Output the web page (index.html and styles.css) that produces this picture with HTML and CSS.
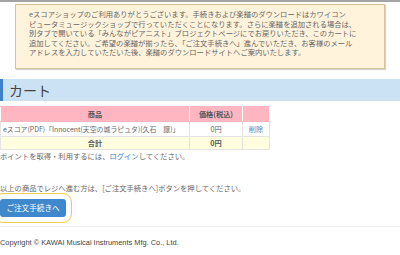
FILE: index.html
```html
<!DOCTYPE html>
<html lang="ja">
<head>
    <meta charset="UTF-8">
    <title>カート</title>
    <link rel="stylesheet" href="styles.css">
</head>
<body>
    <div class="top-bar"></div>

    <div class="notice">
        eスコアショップのご利用ありがとうございます。手続きおよび楽譜のダウンロードはカワイコン<br>
        ピュータミュージックショップで行っていただくことになります。さらに楽譜を追加される場合は、<br>
        別タブで開いている「みんながピアニスト」プロジェクトページにでお戻りいただき、このカートに<br>
        追加してください。ご希望の楽譜が揃ったら、「ご注文手続きへ」進んでいただき、お客様のメール<br>
        アドレスを入力していただいた後、楽譜のダウンロードサイトへご案内いたします。
    </div>

    <h2 class="cart-title">カート</h2>

    <table class="cart-table">
        <tr class="head">
            <th class="col-item">商品</th>
            <th class="col-price">価格(税込)</th>
            <th class="col-del"></th>
        </tr>
        <tr>
            <td class="item-name">eスコア(PDF)「Innocent(天空の城ラピュタ)(久石　譲)」</td>
            <td>0円</td>
            <td><a href="#" class="del">削除</a></td>
        </tr>
        <tr class="total">
            <th>合計</th>
            <th>0円</th>
            <td></td>
        </tr>
    </table>

    <p class="point-note">ポイントを取得・利用するには、<a href="#">ログイン</a>してください。</p>

    <p class="order-note">以上の商品でレジへ進む方は、[ご注文手続きへ]ボタンを押してください。</p>

    <div class="order-row">
        <button type="button" class="order-btn">ご注文手続きへ</button>
    </div>

    <footer class="footer">Copyright © KAWAI Musical Instruments Mfg. Co., Ltd.</footer>
</body>
</html>
```

FILE: styles.css
```css
/* Page */
body {
    margin: 0;
    font-family: "Noto Sans CJK JP", "Liberation Sans", sans-serif;
    color: #666;
    background: #fff;
    overflow: hidden;
}

.top-bar {
    height: 2px;
    background: #a4a4a4;
}

/* Notice box */
.notice {
    margin: 2px 15px 0;
    padding: 5px 13px 10px;
    background: #fff3dc;
    border: 1px solid #d6c19c;
    box-shadow: 1px 1px 1px #d4d4d4;
    font-size: 7.3px;
    line-height: 9.6px;
    white-space: nowrap;
    color: #666;
}

/* Cart heading */
.cart-title {
    margin: 10px 0 0;
    height: 22px;
    line-height: 22px;
    padding-left: 6px;
    border-left: 3px solid #3d82c9;
    background: #cbe1f4;
    font-size: 14px;
    font-weight: normal;
    color: #444;
}

/* Cart table */
.cart-table {
    margin-top: 5px;
    width: 270px;
    border-collapse: collapse;
    table-layout: fixed;
    font-size: 7.2px;
    color: #666;
}

.cart-table th,
.cart-table td {
    border: 1px solid #e4e4e4;
    padding: 0;
    text-align: center;
    height: 14px;
    line-height: 10px;
}

.cart-table .head th {
    background: #ffb6c1;
    border-color: #ffb6c1 #fff;
    color: #555;
}

.col-item { width: 188px; }
.col-price { width: 52px; }

.cart-table .item-name {
    text-align: left;
    padding-left: 2px;
    white-space: nowrap;
    overflow: hidden;
    font-size: 6.9px;
}

.cart-table .total th,
.cart-table .total td {
    background: #ffffe0;
    color: #555;
    height: 12px;
}

.del {
    color: #4a86c5;
    text-decoration: none;
}

/* Notes */
.point-note {
    margin: 1px 0 0;
    font-size: 7.3px;
    line-height: 10px;
}

.point-note a {
    color: #3b7cc4;
    text-decoration: none;
}

.order-note {
    margin: 22px 0 0;
    font-size: 7.3px;
    line-height: 10px;
}

/* Order button */
.order-row {
    padding: 6px 0 9px;
    border-bottom: 1px solid #f0f0f0;
}

.order-btn {
    display: block;
    width: 66px;
    height: 18px;
    padding: 0;
    border: none;
    border-radius: 3px;
    background: #3f88cc;
    color: #fff;
    font-family: "Noto Sans CJK JP", sans-serif;
    font-size: 7.6px;
    outline: 1.5px solid #f7c948;
    outline-offset: 5px;
}

/* Footer */
.footer {
    padding-top: 11px;
    font-family: "Liberation Sans", Arial, sans-serif;
    font-size: 7.4px;
    color: #444;
}
```
